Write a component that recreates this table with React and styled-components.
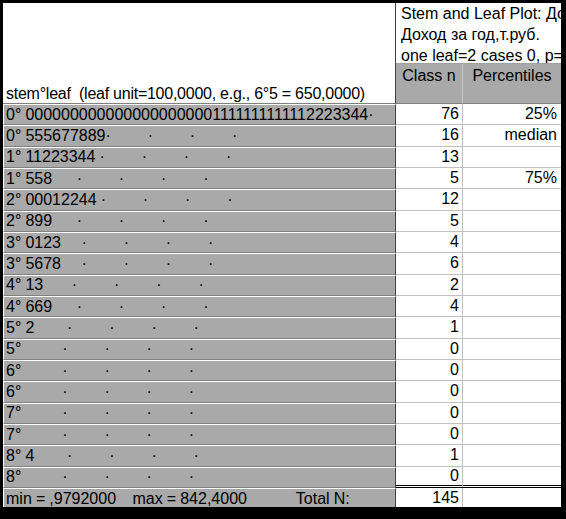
import React from 'react';
import styled, { createGlobalStyle } from 'styled-components';

const Global = createGlobalStyle`
  html, body { margin: 0; padding: 0; background: #000; }
  body { width: 566px; height: 519px; overflow: hidden; font-family: "Liberation Sans", Arial, sans-serif; }
`;

const Frame = styled.div`
  box-sizing: border-box;
  width: 566px;
  height: 519px;
  padding: 3px 5px 12px 3px;
  background: #000;
`;

const Sheet = styled.div`
  height: 504px;
  overflow: hidden;
  display: grid;
  grid-template-columns: 393px 67px 98px;
  grid-template-rows: 101px repeat(19, 21.333px);
  background: #fff;
  font-size: 16px;
  color: #000;
`;

const HeadLeft = styled.div`
  box-sizing: border-box;
  display: flex;
  align-items: flex-end;
  padding-left: 3px;
  line-height: 18px;
  white-space: pre;
  letter-spacing: -0.25px;
  border-right: 1px solid #404040;
  border-bottom: 1px solid #808080;
  overflow: hidden;
`;

const HeadRight = styled.div`
  grid-column: 2 / 4;
  display: flex;
  flex-direction: column;
  min-width: 0;
`;

const Title = styled.div`
  box-sizing: border-box;
  height: 61px;
  padding-left: 5px;
  line-height: 21px;
  white-space: nowrap;
  overflow: hidden;
  border-bottom: 1px solid #a0a0a0;
`;

const HeadCells = styled.div`
  flex: 1;
  display: grid;
  grid-template-columns: 67px 98px;
`;

const HeadCell = styled.div`
  box-sizing: border-box;
  background: #a9a9a9;
  text-align: center;
  padding-top: 1px;
  line-height: 21px;
  white-space: nowrap;
  border-bottom: 1px solid #808080;
  border-right: ${p => (p.$divider ? '1px solid #c8c8c8' : 'none')};
`;

const StemCell = styled.div`
  box-sizing: border-box;
  display: flex;
  align-items: center;
  background: #a9a9a9;
  border-top: 1px solid #fff;
  border-left: 1px solid #fff;
  border-bottom: 1px solid #808080;
  border-right: 1px solid #404040;
  padding-left: 2px;
  line-height: 18px;
  white-space: pre;
  word-spacing: -0.35px;
  overflow: hidden;
`;

const ValueCell = styled.div`
  box-sizing: border-box;
  display: flex;
  align-items: center;
  justify-content: flex-end;
  background: #fff;
  line-height: 18px;
  white-space: nowrap;
  overflow: hidden;
  padding-right: ${p => (p.$wide ? '4px' : '3px')};
  border-right: ${p => (p.$divider ? '1px solid #c0c0c0' : 'none')};
  border-bottom: ${p => (p.$closing ? '3px double #000' : '1px solid #c0c0c0')};
`;

const leafField = (leaves) => {
  if (leaves.length >= 39) return leaves + '\u00b7';
  let s = '';
  for (let i = 0; i < 40; i++) {
    if (i < leaves.length) s += leaves[i];
    else s += i % 10 === 9 ? '\u00b7' : ' ';
  }
  return s.replace(/\s+$/, '');
};

const rows = [
  ['0', '0'.repeat(21) + '1'.repeat(12) + '2223344', 76, '25%'],
  ['0', '555677889', 16, 'median'],
  ['1', '11223344', 13, ''],
  ['1', '558', 5, '75%'],
  ['2', '00012244', 12, ''],
  ['2', '899', 5, ''],
  ['3', '0123', 4, ''],
  ['3', '5678', 6, ''],
  ['4', '13', 2, ''],
  ['4', '669', 4, ''],
  ['5', '2', 1, ''],
  ['5', '', 0, ''],
  ['6', '', 0, ''],
  ['6', '', 0, ''],
  ['7', '', 0, ''],
  ['7', '', 0, ''],
  ['8', '4', 1, ''],
  ['8', '', 0, ''],
];

export default function App() {
  return (
    <>
      <Global />
      <Frame>
        <Sheet>
          <HeadLeft>{'stem\u00b0leaf  (leaf unit=100,0000, e.g., 6\u00b05 = 650,0000)'}</HeadLeft>
          <HeadRight>
            <Title>
              <div>Stem and Leaf Plot: Доход за год,т.руб.</div>
              <div>Доход за год,т.руб.</div>
              <div>one leaf=2 cases 0, p=,05</div>
            </Title>
            <HeadCells>
              <HeadCell $divider>Class n</HeadCell>
              <HeadCell>Percentiles</HeadCell>
            </HeadCells>
          </HeadRight>
          {rows.map(([stem, leaves, n, pct], i) => {
            const last = i === rows.length - 1;
            return (
              <React.Fragment key={i}>
                <StemCell>{stem + '\u00b0 ' + leafField(leaves)}</StemCell>
                <ValueCell $divider $closing={last}>{n}</ValueCell>
                <ValueCell $wide $closing={last}>{pct}</ValueCell>
              </React.Fragment>
            );
          })}
          <StemCell>{'min = ,9792000    max = 842,4000            Total N:'}</StemCell>
          <ValueCell $divider>145</ValueCell>
          <ValueCell $wide />
        </Sheet>
      </Frame>
    </>
  );
}
